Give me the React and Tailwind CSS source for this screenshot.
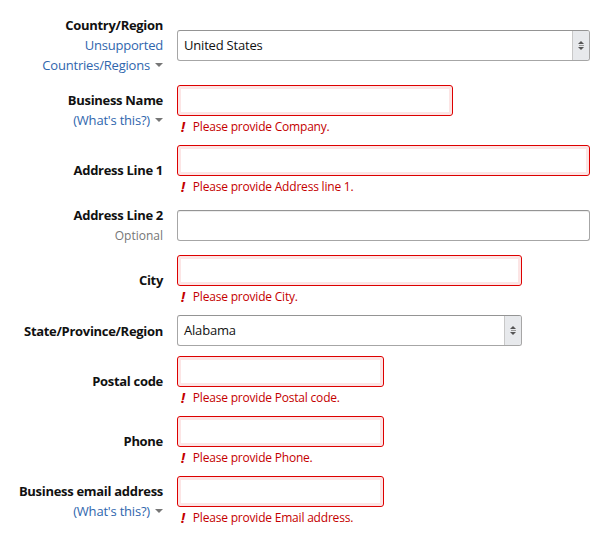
import React from "react";

const font = { fontFamily: '"Open Sans", "Liberation Sans", sans-serif' };

function Caret() {
  return (
    <span className="relative top-[-2px] ml-[5px] inline-block h-0 w-0 border-x-[4px] border-t-[4px] border-x-transparent border-t-[#767676] align-middle" />
  );
}

function Label({ children, sub }) {
  return (
    <div className="w-[163px] shrink-0 text-right">
      <div className="h-[20px] text-[13px] font-bold leading-[20px] tracking-[-0.3px] text-[#111]">{children}</div>
      {sub}
    </div>
  );
}

function Link({ children }) {
  return (
    <div className="h-[20px] overflow-hidden text-[13px] leading-[20px] tracking-[-0.2px] text-[#2f66ad]">
      {children}
      <Caret />
    </div>
  );
}

function ErrInput({ w, msg }) {
  return (
    <div>
      <div
        className={`${w} h-[31px] rounded-[3px] border border-[#d00] bg-white shadow-[inset_0_0_0_3px_rgba(221,0,0,0.1)]`}
      />
      <div className="mt-[2px] flex h-[17px] items-center text-[12px] leading-[17px] tracking-[-0.2px] text-[#c40000]">
        <span className="ml-[4px] mr-[8px] text-[14px] font-bold italic leading-[17px]">!</span>
        <span>{msg}</span>
      </div>
    </div>
  );
}

function Select({ w, value }) {
  return (
    <div className={`${w} flex h-[31px] items-stretch overflow-hidden rounded-[3px] border border-[#a6a6a6] border-t-[#949494] bg-white`}>
      <div className="flex flex-1 items-center pl-[6px] pt-[1px] text-[13px] tracking-[-0.2px] text-[#111]">{value}</div>
      <div className="flex w-[17px] flex-col items-center justify-center gap-[1px] border-l border-[#c8c8c8] bg-[#e7e9ec]">
        <span className="h-0 w-0 border-x-[3px] border-b-[3px] border-x-transparent border-b-[#555]" />
        <span className="h-[1px] w-[5px] bg-[#999]" />
        <span className="h-0 w-0 border-x-[3px] border-t-[3px] border-x-transparent border-t-[#555]" />
      </div>
    </div>
  );
}

function Row({ children }) {
  return <div className="flex items-center gap-[14px]">{children}</div>;
}

export default function App() {
  return (
    <div className="min-h-[534px] w-[603px] bg-white pt-[15px]" style={font}>
      <div className="flex flex-col gap-[10px]">
        <Row>
          <Label
            sub={
              <div className="text-[13px] leading-[20px] tracking-[-0.2px] text-[#2f66ad]">
                <div className="h-[20px]">Unsupported</div>
                <div className="h-[20px] overflow-hidden">
                  Countries/Regions
                  <Caret />
                </div>
              </div>
            }
          >
            Country/Region
          </Label>
          <Select w="w-[413px]" value="United States" />
        </Row>
        <Row>
          <Label sub={<Link>(What's this?)</Link>}>Business Name</Label>
          <ErrInput w="w-[276px]" msg="Please provide Company." />
        </Row>
        <Row>
          <Label>Address Line 1</Label>
          <ErrInput w="w-[413px]" msg="Please provide Address line 1." />
        </Row>
        <Row>
          <Label sub={<div className="h-[20px] pt-[1px] text-[12px] leading-[19px] text-[#767676]">Optional</div>}>
            Address Line 2
          </Label>
          <div className="h-[31px] w-[413px] rounded-[3px] border border-[#a6a6a6] border-t-[#949494] bg-white shadow-[inset_0_1px_0_rgba(0,0,0,0.07)]" />
        </Row>
        <Row>
          <Label>City</Label>
          <ErrInput w="w-[345px]" msg="Please provide City." />
        </Row>
        <Row>
          <Label>State/Province/Region</Label>
          <Select w="w-[345px]" value="Alabama" />
        </Row>
        <Row>
          <Label>Postal code</Label>
          <ErrInput w="w-[207px]" msg="Please provide Postal code." />
        </Row>
        <Row>
          <Label>Phone</Label>
          <ErrInput w="w-[207px]" msg="Please provide Phone." />
        </Row>
        <Row>
          <Label sub={<Link>(What's this?)</Link>}>Business email address</Label>
          <ErrInput w="w-[207px]" msg="Please provide Email address." />
        </Row>
      </div>
    </div>
  );
}
